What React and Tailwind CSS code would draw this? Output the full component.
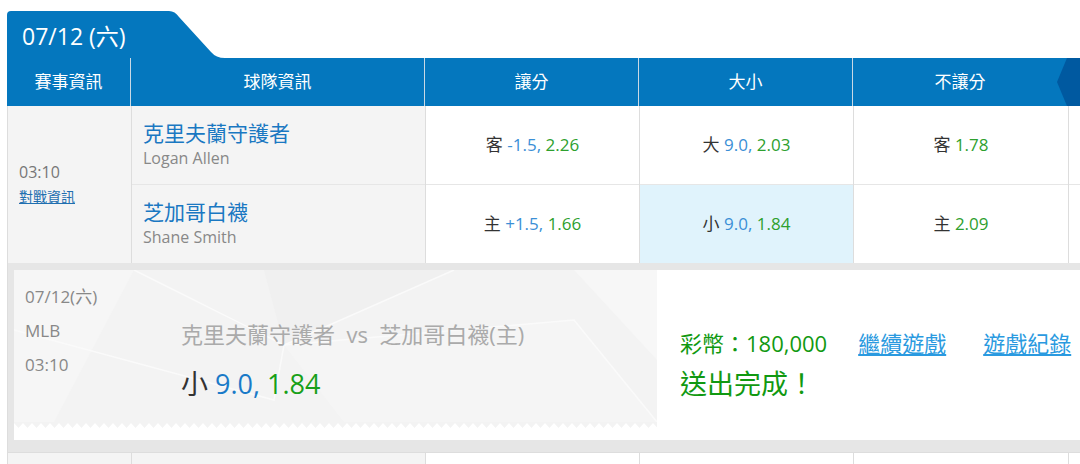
const BLUE = "bg-[#0477be]";

const Cell = ({ children, className = "" }) => (
  <div className={`flex items-center justify-center ${className}`}>{children}</div>
);

const Odds = ({ label, line, price }) => (
  <span className="text-[17px]">
    <span className="text-[#333]">{label}</span>{" "}
    {line && <span className="text-[#3b8fd6]">{line}, </span>}
    <span className="text-[#2ea02e]">{price}</span>
  </span>
);

const rows = [
  {
    team: "克里夫蘭守護者",
    pitcher: "Logan Allen",
    spread: ["客", "-1.5", "2.26"],
    total: ["大", "9.0", "2.03"],
    ml: ["客", null, "1.78"],
  },
  {
    team: "芝加哥白襪",
    pitcher: "Shane Smith",
    spread: ["主", "+1.5", "1.66"],
    total: ["小", "9.0", "1.84"],
    ml: ["主", null, "2.09"],
    picked: true,
  },
];

export default function App() {
  return (
    <div className="w-[1080px] h-[464px] overflow-hidden bg-white font-['Open_Sans','Noto_Sans_CJK_TC',sans-serif]">
      <div className="pl-[7px] pt-[11px]">
        {/* date tab */}
        <div className="flex h-[47px]">
          <div className={`${BLUE} w-[158px] rounded-tl-[4px] pl-[15px] pt-[3px] text-white text-[23px] flex items-center`}>
            07/12 (六)
          </div>
          <svg width="60" height="47" viewBox="0 0 60 47">
            <path d="M0 0 H4 Q10 0 14 6 L46 41 Q51 47 60 47 H0 Z" fill="#0477be" />
          </svg>
        </div>

        {/* header */}
        <div className={`relative flex h-[48px] ${BLUE} text-white text-[17px]`}>
          <Cell className="w-[123px]">賽事資訊</Cell>
          <Cell className="w-[294px] border-l border-[#c9d9e5]">球隊資訊</Cell>
          <Cell className="w-[214px] border-l border-[#c9d9e5]">讓分</Cell>
          <Cell className="w-[214px] border-l border-[#c9d9e5]">大小</Cell>
          <Cell className="w-[215px] border-l border-[#c9d9e5]">不讓分</Cell>
          <svg className="absolute right-0 top-0" width="23" height="48" viewBox="0 0 23 48">
            <polygon points="0,24 10,0 23,0 23,48 10,48" fill="#0059a0" />
          </svg>
        </div>

        {/* game rows */}
        <div className="flex border-l border-[#dddddd]">
          <div className="w-[123px] bg-[#f4f4f4] flex flex-col justify-center pl-[11px]">
            <div className="text-[16px] text-[#777] leading-[24px]">03:10</div>
            <div className="text-[14px] text-[#1f6fb0] underline leading-[26px]">對戰資訊</div>
          </div>
          <div className="w-[294px] border-l border-[#dddddd] flex flex-col">
            {rows.map((r, i) => (
              <div
                key={r.team}
                className={`h-[78px] bg-[#f4f4f4] pl-[11px] pb-[2px] flex flex-col justify-center ${i ? "border-t border-[#e6e6e6] h-[79px]" : ""}`}
              >
                <div className="text-[21px] text-[#1a78c2] leading-[28px]">{r.team}</div>
                <div className="text-[16px] text-[#888] leading-[22px]">{r.pitcher}</div>
              </div>
            ))}
          </div>
          {["spread", "total", "ml"].map((k, ci) => (
            <div key={k} className={`${ci === 2 ? "w-[215px]" : "w-[214px]"} border-l border-[#dddddd] flex flex-col`}>
              {rows.map((r, i) => (
                <Cell
                  key={i}
                  className={`h-[78px] ${i ? "border-t border-[#e6e6e6] h-[79px]" : ""} ${r.picked && k === "total" ? "bg-[#e0f3fc]" : "bg-white"}`}
                >
                  <Odds label={r[k][0]} line={r[k][1]} price={r[k][2]} />
                </Cell>
              ))}
            </div>
          ))}
          <div className="flex-1 border-l border-[#dddddd] flex flex-col">
            <div className="h-[78px]" />
            <div className="h-[79px] border-t border-[#e6e6e6]" />
          </div>
        </div>

        {/* confirmation panel */}
        <div className="bg-[#e6e6e6] pt-[7px] pb-[12px] pl-[6px] border-l border-[#dddddd]">
          <div className="flex h-[170px] bg-white">
            <div className="w-[643px] flex flex-col">
              <div className="relative flex-1 bg-[#f3f3f3] overflow-hidden">
                <svg className="absolute inset-0" width="643" height="152" viewBox="0 0 643 152">
                  <polygon points="0,0 120,0 40,152 0,152" fill="#f6f6f6" />
                  <polygon points="250,0 440,0 270,75" fill="#f0f0f0" />
                  <polygon points="270,75 560,50 643,152 330,152" fill="#f5f5f5" />
                  <polygon points="560,0 643,0 643,90" fill="#f7f7f7" />
                  <polyline points="0,60 260,130 270,75 440,0" fill="none" stroke="#fafafa" strokeWidth="1.5" />
                  <polyline points="120,0 270,75 560,50 643,152" fill="none" stroke="#fafafa" strokeWidth="1.5" />
                </svg>
                <div className="relative flex pl-[11px] pt-[10px]">
                  <div className="w-[156px] text-[17px] text-[#888] leading-[34px]">
                    <div>07/12(六)</div>
                    <div>MLB</div>
                    <div>03:10</div>
                  </div>
                  <div className="pt-[39px]">
                    <div className="text-[22px] text-[#aaa] leading-[30px] whitespace-nowrap">
                      克里夫蘭守護者&nbsp;&nbsp;vs&nbsp;&nbsp;芝加哥白襪(主)
                    </div>
                    <div className="mt-[17px] text-[27px] leading-[36px] whitespace-nowrap">
                      <span className="text-[#333]">小</span>{" "}
                      <span className="text-[#1a7ac8]">9.0, </span>
                      <span className="text-[#18a018]">1.84</span>
                    </div>
                  </div>
                </div>
              </div>
              <svg width="643" height="6" viewBox="0 0 643 6" className="block">
                <defs>
                  <pattern id="teeth" width="9" height="6" patternUnits="userSpaceOnUse">
                    <polygon points="0,0 9,0 9,1 4.5,6 0,1" fill="#f3f3f3" />
                  </pattern>
                </defs>
                <rect width="643" height="6" fill="url(#teeth)" />
              </svg>
              <div className="h-[12px]" />
            </div>
            <div className="flex-1 pl-[23px] pt-[58px] whitespace-nowrap">
              <div className="flex items-center leading-[30px]">
                <span className="text-[22px] text-[#119911]">彩幣：180,000</span>
                <span className="ml-[31px] text-[22px] text-[#2a9ae0] underline">繼續遊戲</span>
                <span className="ml-[37px] text-[22px] text-[#2a9ae0] underline">遊戲紀錄</span>
              </div>
              <div className="mt-[8px] text-[27px] text-[#119911] leading-[36px]">送出完成！</div>
            </div>
          </div>
        </div>

        {/* next game row (cut off) */}
        <div className="flex h-[40px] border-l border-t border-[#dddddd]">
          <div className="w-[123px] bg-[#f4f4f4]" />
          <div className="w-[294px] border-l border-[#dddddd] bg-[#f4f4f4]" />
          <div className="w-[214px] border-l border-[#dddddd]" />
          <div className="w-[214px] border-l border-[#dddddd]" />
          <div className="w-[215px] border-l border-[#dddddd]" />
          <div className="flex-1 border-l border-[#dddddd]" />
        </div>
      </div>
    </div>
  );
}
